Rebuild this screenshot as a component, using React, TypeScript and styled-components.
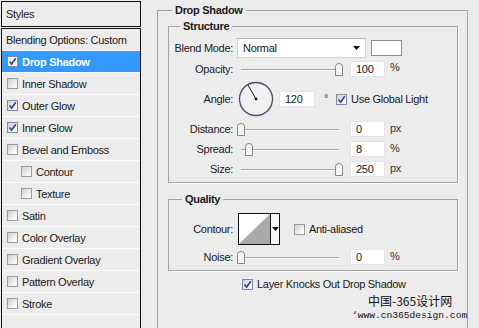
import React from 'react';
import styled, { createGlobalStyle } from 'styled-components';

const GlobalStyle = createGlobalStyle`
  html, body {
    margin: 0;
    padding: 0;
    background: #ececec;
  }
  body {
    font-family: "Liberation Sans", Arial, sans-serif;
    font-size: 11px;
    letter-spacing: -0.3px;
    color: #1a1a1a;
  }
`;

const Page = styled.div`
  position: relative;
  width: 479px;
  height: 328px;
  overflow: hidden;
  display: flex;
  gap: 16px;
  padding: 1px 0 0 1px;
  box-sizing: border-box;
  background: #ececec;
`;

/* ---------- left: styles list ---------- */

const SidePanel = styled.div`
  width: 140px;
  flex: none;
  display: flex;
  flex-direction: column;
`;

const StylesHead = styled.div`
  height: 24px;
  border: 1px solid #111;
  display: flex;
  align-items: center;
  padding-left: 4px;
  background: #ececec;
`;

const StyleList = styled.ul`
  list-style: none;
  margin: 1px 0 0;
  padding: 0;
  flex: 1;
  border: 1px solid #111;
  border-bottom: none;
`;

const StyleRow = styled.li<{ $selected?: boolean; $indent?: boolean; $plain?: boolean }>`
  height: 21px;
  border-bottom: 1px solid #fbfbfb;
  display: flex;
  align-items: center;
  gap: 4px;
  padding-left: ${(p) => (p.$plain ? 4 : p.$indent ? 19 : 5)}px;
  background: ${(p) => (p.$selected ? '#3399ff' : '#ececec')};
  color: ${(p) => (p.$selected ? '#fff' : '#1a1a1a')};
  font-weight: ${(p) => (p.$selected ? 'bold' : 'normal')};
`;

const Box = styled.span<{ $checked?: boolean; $light?: boolean }>`
  width: 9px;
  height: 9px;
  flex: none;
  border: 1px solid ${(p) => (p.$checked ? '#7d8aa6' : '#9a9a9a')};
  background: ${(p) =>
    p.$light ? '#fff' : 'linear-gradient(135deg, #cfcfcf 0%, #f4f4f4 70%, #ffffff 100%)'};
  display: inline-flex;
  align-items: center;
  justify-content: center;
`;

function Check({ checked, light }: { checked?: boolean; light?: boolean }) {
  return (
    <Box $checked={checked} $light={light}>
      {checked && (
        <svg width="9" height="9" viewBox="0 0 9 9">
          <path d="M1.5 4.5 L3.6 7 L7.8 1.2" fill="none" stroke="#2b47a8" strokeWidth="1.7" />
        </svg>
      )}
    </Box>
  );
}

/* ---------- right: option groups ---------- */

const Group = styled.fieldset<{ $outer?: boolean }>`
  margin: ${(p) => (p.$outer ? '2px 0 0' : '1px 0 0')};
  padding: ${(p) => (p.$outer ? '1px 9px 0 10px' : '5px 0 3px 0')};
  border: 1px solid #a3a3a3;
  box-shadow: ${(p) => (p.$outer ? 'none' : '1px 1px 0 #fafafa')};
  width: ${(p) => (p.$outer ? '311px' : 'auto')};
  min-height: ${(p) => (p.$outer ? '360px' : '0')};
  box-sizing: border-box;
  flex: none;
  & + & {
    margin-top: 9px;
  }
`;

const Legend = styled.legend<{ $shift: number }>`
  font-weight: bold;
  line-height: 14px;
  padding: 0 3px;
  margin-left: ${(p) => p.$shift}px;
`;

const Row = styled.div<{ $h?: number }>`
  height: ${(p) => p.$h ?? 20}px;
  display: flex;
  align-items: center;
`;

const Label = styled.span`
  width: 64px;
  flex: none;
  text-align: right;
  margin-right: 4px;
  color: #222;
`;

const Select = styled.div`
  width: 129px;
  height: 20px;
  box-sizing: border-box;
  background: #fff;
  border: 1px solid #d4d4d4;
  border-top-color: #b4b4b4;
  display: flex;
  align-items: center;
  justify-content: space-between;
  padding: 0 5px 0 5px;
`;

const Swatch = styled.div`
  width: 31px;
  height: 16px;
  box-sizing: border-box;
  margin-left: 5px;
  background: #fff;
  border: 1px solid #8e8e8e;
`;

const SliderWrap = styled.div`
  position: relative;
  width: 104px;
  height: 14px;
  margin: 0 8px 0 1px;
  flex: none;
`;

const Track = styled.div`
  position: absolute;
  left: 3px;
  right: 3px;
  top: 7px;
  border-top: 1px solid #a6a6a6;
  border-bottom: 1px solid #fafafa;
`;

const Thumb = styled.svg`
  position: absolute;
  top: 1px;
`;

function Slider({ value }: { value: number }) {
  return (
    <SliderWrap>
      <Track />
      <Thumb width="8" height="13" viewBox="0 0 8 13" style={{ left: 3 + value * 98 - 4 }}>
        <path
          d="M0.5 12.5 V3.5 Q0.5 0.5 4 0.5 Q7.5 0.5 7.5 3.5 V12.5 Z"
          fill="#f4f4f4"
          stroke="#858585"
        />
      </Thumb>
    </SliderWrap>
  );
}

const NumField = styled.div<{ $w?: number }>`
  width: ${(p) => p.$w ?? 35}px;
  height: 16px;
  box-sizing: border-box;
  background: #fff;
  border: 1px solid #e4e4e4;
  padding-left: 5px;
  display: flex;
  align-items: center;
  flex: none;
`;

const Unit = styled.span<{ $gap?: number }>`
  margin-left: ${(p) => p.$gap ?? 5}px;
  margin-bottom: 3px;
  color: #333;
`;

const Dial = styled.svg`
  margin-left: 1px;
  flex: none;
`;

const Inline = styled.label<{ $gap?: number }>`
  display: flex;
  align-items: center;
  gap: 4px;
  margin-left: ${(p) => p.$gap ?? 0}px;
`;

const ContourPick = styled.div`
  width: 42px;
  height: 32px;
  box-sizing: border-box;
  margin-left: 1px;
  border: 1px solid #111;
  display: flex;
  background: #fff;
`;

const ContourArrow = styled.div`
  flex: 1;
  border-left: 1px solid #111;
  display: flex;
  align-items: center;
  justify-content: center;
  background: #f6f6f6;
`;

const KnockRow = styled(Row)`
  margin: 3px 0 0 74px;
`;

const Watermark = styled.div`
  position: absolute;
  left: 352px;
  top: 293px;
  line-height: 15px;
  letter-spacing: 0;
  color: #111;
`;

const WmTitle = styled.div`
  padding-left: 16px;
  font-family: "Noto Sans CJK SC", sans-serif;
  font-size: 12px;
`;

const WmUrl = styled.div`
  font-family: "Liberation Mono", monospace;
  font-size: 9.6px;
`;

const Arrow = () => (
  <svg width="7" height="4" viewBox="0 0 7 4">
    <path d="M0 0 H7 L3.5 4 Z" fill="#111" />
  </svg>
);

const layers: { name: string; checked?: boolean; indent?: boolean; selected?: boolean }[] = [
  { name: 'Drop Shadow', checked: true, selected: true },
  { name: 'Inner Shadow' },
  { name: 'Outer Glow', checked: true },
  { name: 'Inner Glow', checked: true },
  { name: 'Bevel and Emboss' },
  { name: 'Contour', indent: true },
  { name: 'Texture', indent: true },
  { name: 'Satin' },
  { name: 'Color Overlay' },
  { name: 'Gradient Overlay' },
  { name: 'Pattern Overlay' },
  { name: 'Stroke' },
];

export default function App() {
  return (
    <Page>
      <GlobalStyle />
      <SidePanel>
        <StylesHead>Styles</StylesHead>
        <StyleList>
          <StyleRow $plain>Blending Options: Custom</StyleRow>
          {layers.map((l) => (
            <StyleRow key={l.name} $indent={l.indent} $selected={l.selected}>
              <Check checked={l.checked} light={l.selected} />
              {l.name}
            </StyleRow>
          ))}
        </StyleList>
      </SidePanel>

      <Group $outer>
        <Legend $shift={4}>Drop Shadow</Legend>

        <Group>
          <Legend $shift={11}>Structure</Legend>
          <Row>
            <Label>Blend Mode:</Label>
            <Select>
              Normal
              <Arrow />
            </Select>
            <Swatch />
          </Row>
          <Row $h={21}>
            <Label>Opacity:</Label>
            <Slider value={1} />
            <NumField>100</NumField>
            <Unit>%</Unit>
          </Row>
          <Row $h={40}>
            <Label>Angle:</Label>
            <Dial width="36" height="36" viewBox="0 0 36 36">
              <circle cx="18" cy="18" r="16.5" fill="#f0f0f0" stroke="#45506c" strokeWidth="1.4" />
              <line x1="18" y1="18" x2="10" y2="4.2" stroke="#111" strokeWidth="1" />
              <circle cx="18" cy="18" r="1.4" fill="#111" />
            </Dial>
            <NumField $w={36} style={{ marginLeft: 5 }}>120</NumField>
            <Unit $gap={9}>°</Unit>
            <Inline $gap={8}>
              <Check checked />
              Use Global Light
            </Inline>
          </Row>
          <Row>
            <Label>Distance:</Label>
            <Slider value={0} />
            <NumField>0</NumField>
            <Unit>px</Unit>
          </Row>
          <Row>
            <Label>Spread:</Label>
            <Slider value={0.08} />
            <NumField>8</NumField>
            <Unit>%</Unit>
          </Row>
          <Row>
            <Label>Size:</Label>
            <Slider value={1} />
            <NumField>250</NumField>
            <Unit>px</Unit>
          </Row>
        </Group>

        <Group>
          <Legend $shift={13}>Quality</Legend>
          <Row $h={36}>
            <Label>Contour:</Label>
            <ContourPick>
              <svg width="31" height="30" viewBox="0 0 31 30">
                <polygon points="0,30 31,0 31,30" fill="#a9a9a9" />
              </svg>
              <ContourArrow>
                <Arrow />
              </ContourArrow>
            </ContourPick>
            <Inline $gap={14}>
              <Check />
              Anti-aliased
            </Inline>
          </Row>
          <Row>
            <Label>Noise:</Label>
            <Slider value={0} />
            <NumField>0</NumField>
            <Unit>%</Unit>
          </Row>
        </Group>

        <KnockRow>
          <Inline>
            <Check checked />
            Layer Knocks Out Drop Shadow
          </Inline>
        </KnockRow>
      </Group>

      <Watermark>
        <WmTitle>中国-365设计网</WmTitle>
        <WmUrl>‘www.cn365design.com</WmUrl>
      </Watermark>
    </Page>
  );
}
